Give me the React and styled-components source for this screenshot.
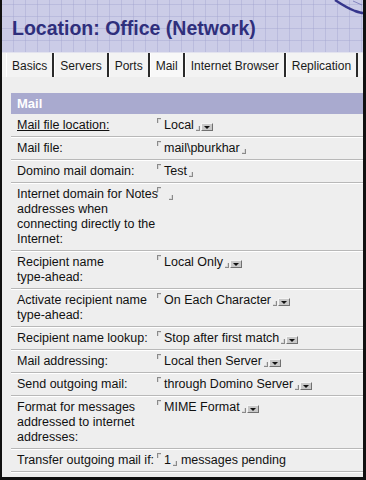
import React from 'react'
import styled, { createGlobalStyle } from 'styled-components'

const Global = createGlobalStyle`
  html, body { margin: 0; padding: 0; background: #fff; }
  body { font-family: "Liberation Sans", Arial, sans-serif; }
`

const tabs = ['Basics', 'Servers', 'Ports', 'Mail', 'Internet Browser', 'Replication']

const rows = [
  { label: ['Mail file location:'], value: 'Local', drop: true, link: true },
  { label: ['Mail file:'], value: 'mail\\pburkhar' },
  { label: ['Domino mail domain:'], value: 'Test' },
  { label: ['Internet domain for Notes', 'addresses when', 'connecting directly to the', 'Internet:'], value: '\u00a0' },
  { label: ['Recipient name', 'type-ahead:'], value: 'Local Only', drop: true },
  { label: ['Activate recipient name', 'type-ahead:'], value: 'On Each Character', drop: true },
  { label: ['Recipient name lookup:'], value: 'Stop after first match', drop: true },
  { label: ['Mail addressing:'], value: 'Local then Server', drop: true },
  { label: ['Send outgoing mail:'], value: 'through Domino Server', drop: true },
  { label: ['Format for messages', 'addressed to internet', 'addresses:'], value: 'MIME Format', drop: true },
  { label: ['Transfer outgoing mail if:'], value: '1 ', after: 'messages pending' },
]

const App = () => {
  return (
    <Frame>
      <Global />
      <Header>
        <Title>Location: Office (Network)</Title>
        <Scribble viewBox="0 0 30 18">
          <path d="M2 0 C8 4 14 8 22 11 C25 12 28 13 30 13" stroke="#35358c" strokeWidth="2.4" fill="none" />
          <path d="M20 1 L29 5" stroke="#8586c0" strokeWidth="1" fill="none" />
        </Scribble>
      </Header>
      <TabStrip>
        {tabs.map(t => (
          <Tab key={t} $active={t === 'Mail'}>{t}</Tab>
        ))}
      </TabStrip>
      <Body>
        <SectionBar>Mail</SectionBar>
        {rows.map((r, i) => (
          <Row key={i}>
            <Label $link={r.link}>
              {r.label.map((l, j) => (
                <React.Fragment key={j}>{j > 0 && <br />}{l}</React.Fragment>
              ))}
            </Label>
            <Value>
              <OpenMark />
              {r.value}
              <CloseMark />
              {r.drop && <DropButton><Arrow /></DropButton>}
              {r.after && <After>{r.after}</After>}
            </Value>
          </Row>
        ))}
      </Body>
    </Frame>
  )
}

export default App

const Frame = styled.div`
  width: 366px;
  height: 480px;
  box-sizing: border-box;
  border-left: 2px solid #111;
  border-right: 3px solid #111;
  border-bottom: 3px solid #111;
  background: #eeeeee;
  overflow: hidden;
  display: flex;
  flex-direction: column;
`

const Header = styled.div`
  position: relative;
  height: 52px;
  flex: none;
  display: flex;
  align-items: center;
  padding-left: 10px;
  background-color: #cbcce7;
  background-image:
    repeating-linear-gradient(90deg, transparent 0 11px, rgba(160,162,206,0.4) 11px 12px),
    repeating-linear-gradient(0deg, transparent 0 11px, rgba(160,162,206,0.4) 11px 12px);
`

const Title = styled.h1`
  margin: 4px 0 0;
  font-family: "Liberation Sans", Arial, sans-serif;
  font-size: 19.5px;
  font-weight: bold;
  color: #2f2f7c;
`

const Scribble = styled.svg`
  position: absolute;
  top: 0;
  right: 0;
  width: 30px;
  height: 18px;
`

const TabStrip = styled.div`
  height: 25px;
  flex: none;
  display: flex;
  align-items: stretch;
  padding-left: 4px;
  background: #f3f3f3;
  border-top: 1px solid #e2e2ee;
  box-sizing: border-box;
`

const Tab = styled.div`
  display: flex;
  align-items: center;
  padding: 1px 5px 0 5px;
  font-size: 12px;
  color: #1a1a1a;
  border-left: 1px solid #ffffff;
  border-right: 2px solid #2a2a2a;
  background: ${p => (p.$active ? '#f8f8f8' : '#f3f3f3')};
  white-space: nowrap;
`

const Body = styled.div`
  flex: 1;
  padding: 16px 0 0 9px;
  display: flex;
  flex-direction: column;
`

const SectionBar = styled.div`
  height: 21px;
  display: flex;
  align-items: center;
  padding-left: 6px;
  background: #a9aacf;
  color: #ffffff;
  font-size: 13px;
  font-weight: bold;
`

const Row = styled.div`
  display: grid;
  grid-template-columns: 144px 1fr;
  padding: 4px 0 3px;
  border-bottom: 1px solid #b8b8b8;
  box-shadow: 0 1px 0 #ffffff;
  font-size: 12.5px;
  line-height: 15px;
  color: #111;
`

const Label = styled.div`
  padding-left: 6px;
  white-space: nowrap;
  text-decoration: ${p => (p.$link ? 'underline' : 'none')};
`

const Value = styled.div`
  display: flex;
  align-items: flex-start;
  white-space: nowrap;
`

const OpenMark = styled.span`
  flex: none;
  width: 3px;
  height: 4px;
  margin: 0 3px 0 2px;
  border-top: 1px solid #8a8a8a;
  border-left: 1px solid #8a8a8a;
  box-shadow: inset 1px 1px 0 #d8d8d8;
`

const CloseMark = styled.span`
  flex: none;
  width: 3px;
  height: 4px;
  margin: 8px 1px 0 2px;
  border-bottom: 1px solid #8a8a8a;
  border-right: 1px solid #8a8a8a;
  box-shadow: inset -1px -1px 0 #d8d8d8;
`

const DropButton = styled.span`
  flex: none;
  width: 12px;
  height: 8px;
  margin-top: 5px;
  box-sizing: border-box;
  background: #c8c8c8;
  border-top: 1px solid #f4f4f4;
  border-left: 1px solid #f4f4f4;
  border-right: 1px solid #707070;
  border-bottom: 1px solid #707070;
  display: flex;
  align-items: center;
  justify-content: center;
`

const Arrow = styled.span`
  width: 0;
  height: 0;
  border-left: 3px solid transparent;
  border-right: 3px solid transparent;
  border-top: 3px solid #111;
`

const After = styled.span`
  margin-left: 3px;
`
